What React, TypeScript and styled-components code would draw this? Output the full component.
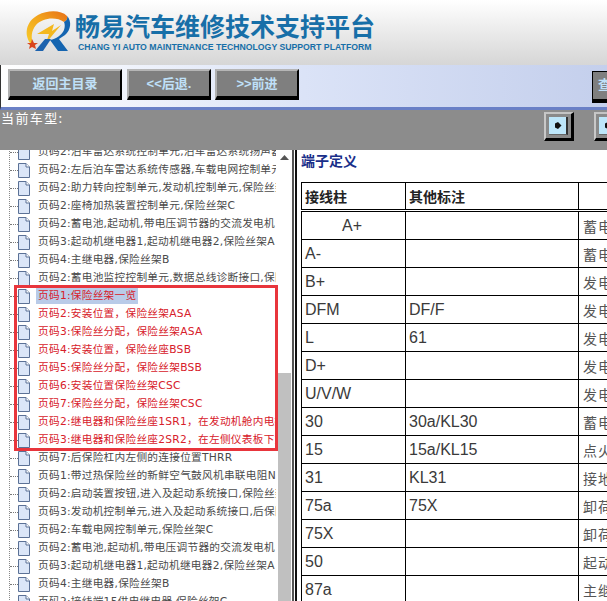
import * as React from "react";
import styled, { createGlobalStyle } from "styled-components";

const GlobalStyle = createGlobalStyle`
  html, body {
    margin: 0;
    padding: 0;
    height: 100%;
    overflow: hidden;
    background: #fff;
  }
`;

const Page = styled.div`
  width: 607px;
  height: 601px;
  overflow: hidden;
  display: flex;
  flex-direction: column;
  font-family: "Liberation Sans", "Noto Sans CJK SC", sans-serif;
`;

const Header = styled.div`
  height: 65px;
  flex: none;
  box-sizing: border-box;
  padding: 10px 0 0 24px;
  display: flex;
  gap: 1px;
  background: linear-gradient(180deg, #ffffff 0%, #eeeeee 40%, #d6d6d6 100%);
`;

const Brand = styled.div`
  display: flex;
  flex-direction: column;
  color: #176fa8;
  font-family: "Noto Sans CJK SC", sans-serif;
`;

const Title = styled.div`
  font-size: 25px;
  line-height: 30px;
  height: 30px;
  font-weight: 700;
  white-space: nowrap;
`;

const Subtitle = styled.div`
  margin: 1px 0 0 3px;
  font-family: "Liberation Sans", sans-serif;
  font-size: 8.7px;
  line-height: 12px;
  font-weight: 700;
  white-space: nowrap;
`;

const Toolbar = styled.div`
  height: 45px;
  flex: none;
  box-sizing: border-box;
  padding: 4px 0 0 7px;
  display: flex;
  align-items: flex-start;
  border-left: 1px solid #333;
  border-bottom: 3px solid #6a80c6;
  background: linear-gradient(90deg, #ffffff 0%, #dbe3f7 50%, #c4cfec 100%);
  position: relative;
`;

const ToolButton = styled.div<{ $w: number; $gap: number }>`
  width: ${(p) => p.$w}px;
  height: 31px;
  margin-right: ${(p) => p.$gap}px;
  flex: none;
  box-sizing: border-box;
  background: #7f7f7f;
  border-style: solid;
  border-width: 2px 2px 4px 2px;
  border-color: #b5b5b5 #000 #000 #b0b0b0;
  color: #bfe0f8;
  font-family: "Liberation Sans", "Noto Sans CJK SC", sans-serif;
  font-size: 13px;
  font-weight: 700;
  line-height: 25px;
  text-align: center;
  white-space: nowrap;
`;

const ClippedButton = styled(ToolButton)`
  position: absolute;
  left: 591px;
  top: 6px;
  height: 32px;
  margin: 0;
  text-align: left;
  padding-left: 5px;
  border-color: #000 #000 #000 #000;
  border-width: 1px 1px 4px 1px;
`;

const ModelBar = styled.div`
  height: 40px;
  flex: none;
  box-sizing: border-box;
  display: flex;
  justify-content: space-between;
  background: #8c8c8c;
  color: #fff;
  font-size: 13px;
  line-height: 16px;
`;

const ModelLabel = styled.div`
  padding: 0 0 0 1px;
  letter-spacing: 1.4px;
  font-family: "Noto Sans CJK SC", sans-serif;
`;

const ModelNav = styled.div`
  display: flex;
  gap: 20px;
  padding: 2px 0 0 0;
  margin-right: -17px;
`;

const NavButton = styled.div`
  width: 30px;
  height: 29px;
  box-sizing: border-box;
  border-style: solid;
  border-width: 2px 3px 3px 2px;
  border-color: #c4c4c4 #000 #000 #c8c8c8;
  background: #8a8a8a;
  padding: 3px;
`;

const NavFace = styled.div`
  height: 100%;
  background: #bde6fa;
  border-right: 2px solid #333;
  border-bottom: 1px solid #666;
  box-sizing: border-box;
  display: flex;
  align-items: center;
  justify-content: center;
`;

const Body = styled.div`
  flex: 1;
  min-height: 0;
  display: flex;
`;

const Sidebar = styled.div`
  width: 292px;
  flex: none;
  display: flex;
  position: relative;
  overflow: hidden;
`;

const TreeClip = styled.div`
  width: 276px;
  flex: none;
  overflow: hidden;
  margin-top: -7px;
  background-image: linear-gradient(#888 50%, transparent 50%);
  background-size: 1px 2px;
  background-repeat: repeat-y;
  background-position: 9px 0;
`;

const Row = styled.div<{ $red?: boolean }>`
  height: 18px;
  display: flex;
  align-items: center;
  white-space: nowrap;
  color: ${(p) => (p.$red ? "#d7202a" : "#4a4a4a")};
  font-family: "DejaVu Sans", "Noto Sans CJK SC", sans-serif;
  font-size: 10.7px;
  letter-spacing: 0.25px;
`;

const Dots = styled.span`
  width: 8px;
  margin-left: 10px;
  flex: none;
  border-top: 1px dotted #777;
`;

const RowLabel = styled.span<{ $selected?: boolean }>`
  margin-left: 6px;
  padding: 0 2px;
  line-height: 16px;
  background: ${(p) => (p.$selected ? "#b9cbe8" : "transparent")};
`;

const Scrollbar = styled.div`
  width: 16px;
  flex: none;
  display: flex;
  flex-direction: column;
  background: #fff;
`;

const ScrollUp = styled.div`
  height: 223px;
  flex: none;
  display: flex;
  justify-content: center;
  padding-top: 5px;
  box-sizing: border-box;
`;

const ScrollThumb = styled.div`
  flex: 1;
  margin: 0 1px 0 2px;
  background: #c0c0c0;
`;

const Divider = styled.div`
  width: 5px;
  flex: none;
  box-sizing: border-box;
  border-left: 2px solid #555;
  border-right: 2px solid #111;
  background: #fff;
`;

const Content = styled.div`
  flex: 1;
  min-width: 0;
  overflow: hidden;
  padding: 0 0 0 4px;
  color: #333;
`;

const Heading = styled.div`
  color: #1a2f8a;
  font-family: "Noto Sans CJK SC", sans-serif;
  font-size: 14px;
  font-weight: 700;
  line-height: 20px;
  margin-bottom: 12px;
`;

const Table = styled.table`
  width: 500px;
  border-collapse: collapse;
  table-layout: fixed;
  font-size: 16px;
`;

const HeadCell = styled.th`
  height: 26px;
  padding: 0 0 0 3px;
  border: 1px solid #000;
  border-bottom: 3px double #000;
  text-align: left;
  color: #222;
  font-family: "Noto Sans CJK SC", sans-serif;
  font-size: 14px;
  font-weight: 700;
  line-height: 20px;
`;

const Cell = styled.td<{ $center?: boolean }>`
  height: 27px;
  padding: 0 0 0 ${(p) => (p.$center ? "40px" : "3px")};
  border: 1px solid #000;
  font-size: 16px;
  line-height: 20px;
  color: #3a3a3a;
  white-space: nowrap;
  overflow: hidden;
`;

const DescCell = styled(Cell)`
  padding-left: 4px;
  font-family: "Noto Sans CJK SC", sans-serif;
  font-size: 14px;
  letter-spacing: 1px;
  color: #555;
`;

const RedBox = styled.div`
  position: absolute;
  left: 14px;
  top: 135px;
  width: 264px;
  height: 166px;
  box-sizing: border-box;
  border: 3px solid #e8353c;
  pointer-events: none;
`;

const Logo = () => (
  <svg width="50" height="44" viewBox="0 0 50 44" style={{ flex: "none" }}>
    <defs>
      <linearGradient id="swoosh" x1="0" y1="1" x2="1" y2="0">
        <stop offset="0" stopColor="#f7cc2a" />
        <stop offset="0.55" stopColor="#f2a41c" />
        <stop offset="1" stopColor="#e66f18" />
      </linearGradient>
    </defs>
    <path
      d="M7 34C0 26 1 12 14 5C24 0 37 0 43 6C44 9 42 11 40 12C32 6 18 8 12 15C7 21 7 28 9 33Z"
      fill="url(#swoosh)"
    />
    <path d="M13 24L30 14L28 21L37 15L22 33L25 24Z" fill="#f4b81e" />
    <path d="M8 29L10 33L14 33L11 35L12 39L8 37L5 39L6 35L3 33L7 33Z" fill="#d9451c" />
    <path d="M11 41L21 29H27L19 41Z" fill="#1c62ae" />
    <path d="M43 6C48 11 47 20 41 25L35 29L44 41H34L26 30C32 29 38 25 40 20C41 17 41 14 40 12C42 11 44 9 43 6Z" fill="#1565b0" />
  </svg>
);

const PageIcon = () => (
  <svg width="12" height="15" viewBox="0 0 12 15" style={{ flex: "none" }}>
    <path d="M0.5 0.5H8L11.5 4V14.5H0.5Z" fill="#dbe6f8" stroke="#5b7196" />
    <path d="M8 0.5V4H11.5" fill="#fff" stroke="#5b7196" />
  </svg>
);

const ArrowUp = () => (
  <svg width="9" height="5" viewBox="0 0 9 5">
    <path d="M4.5 0L9 5H0Z" fill="#555" />
  </svg>
);

const NavArrow = () => (
  <svg width="8" height="9" viewBox="0 0 8 9">
    <path d="M1 2.5L4 1L7.5 4.5L4 8L1 6.5Z" fill="#111" />
  </svg>
);

interface TreeItem {
  label: string;
  red?: boolean;
  selected?: boolean;
}

const treeItems: TreeItem[] = [
  { label: "页码2:泊车雷达系统控制单元,泊车雷达系统扬声器" },
  { label: "页码2:左后泊车雷达系统传感器,车载电网控制单元" },
  { label: "页码2:助力转向控制单元,发动机控制单元,保险丝架" },
  { label: "页码2:座椅加热装置控制单元,保险丝架C" },
  { label: "页码2:蓄电池,起动机,带电压调节器的交流发电机" },
  { label: "页码3:起动机继电器1,起动机继电器2,保险丝架A" },
  { label: "页码4:主继电器,保险丝架B" },
  { label: "页码2:蓄电池监控控制单元,数据总线诊断接口,保险" },
  { label: "页码1:保险丝架一览", red: true, selected: true },
  { label: "页码2:安装位置\uFF0C保险丝架ASA", red: true },
  { label: "页码3:保险丝分配\uFF0C保险丝架ASA", red: true },
  { label: "页码4:安装位置\uFF0C保险丝座BSB", red: true },
  { label: "页码5:保险丝分配\uFF0C保险丝架BSB", red: true },
  { label: "页码6:安装位置保险丝架CSC", red: true },
  { label: "页码7:保险丝分配\uFF0C保险丝架CSC", red: true },
  { label: "页码2:继电器和保险丝座1SR1\uFF0C在发动机舱内电控", red: true },
  { label: "页码3:继电器和保险丝座2SR2\uFF0C在左侧仪表板下方", red: true },
  { label: "页码7:后保险杠内左侧的连接位置THRR" },
  { label: "页码1:带过热保险丝的新鲜空气鼓风机串联电阻N24" },
  { label: "页码2:启动装置按钮,进入及起动系统接口,保险丝架" },
  { label: "页码3:发动机控制单元,进入及起动系统接口,后保险" },
  { label: "页码2:车载电网控制单元,保险丝架C" },
  { label: "页码2:蓄电池,起动机,带电压调节器的交流发电机" },
  { label: "页码3:起动机继电器1,起动机继电器2,保险丝架A" },
  { label: "页码4:主继电器,保险丝架B" },
  { label: "页码2:接线端15供电继电器,保险丝架C" },
];

const tableRows = [
  ["A+", "", "蓄电池正极"],
  ["A-", "", "蓄电池负极"],
  ["B+", "", "发电机正极"],
  ["DFM", "DF/F", "发电机负载"],
  ["L", "61", "发电机指示灯"],
  ["D+", "", "发电机励磁"],
  ["U/V/W", "", "发电机相位"],
  ["30", "30a/KL30", "蓄电池正极"],
  ["15", "15a/KL15", "点火开关"],
  ["31", "KL31", "接地"],
  ["75a", "75X", "卸荷继电器"],
  ["75X", "", "卸荷继电器"],
  ["50", "", "起动信号"],
  ["87a", "", "主继电器"],
];

export default function App() {
  return (
    <Page>
      <GlobalStyle />
      <Header>
        <Logo />
        <Brand>
          <Title>畅易汽车维修技术支持平台</Title>
          <Subtitle>CHANG YI AUTO MAINTENANCE TECHNOLOGY SUPPORT PLATFORM</Subtitle>
        </Brand>
      </Header>
      <Toolbar>
        <ToolButton $w={114} $gap={5}>返回主目录</ToolButton>
        <ToolButton $w={84} $gap={4}>&lt;&lt;后退.</ToolButton>
        <ToolButton $w={84} $gap={0}>&gt;&gt;前进</ToolButton>
        <ClippedButton $w={40} $gap={0}>查看</ClippedButton>
      </Toolbar>
      <ModelBar>
        <ModelLabel>当前车型:</ModelLabel>
        <ModelNav>
          <NavButton>
            <NavFace>
              <NavArrow />
            </NavFace>
          </NavButton>
          <NavButton>
            <NavFace>
              <NavArrow />
            </NavFace>
          </NavButton>
        </ModelNav>
      </ModelBar>
      <Body>
        <Sidebar>
          <TreeClip>
            {treeItems.map((item, idx) => (
              <Row key={"tree-row-" + idx} $red={item.red}>
                <Dots />
                <PageIcon />
                <RowLabel $selected={item.selected}>{item.label}</RowLabel>
              </Row>
            ))}
          </TreeClip>
          <Scrollbar>
            <ScrollUp>
              <ArrowUp />
            </ScrollUp>
            <ScrollThumb />
          </Scrollbar>
          <RedBox />
        </Sidebar>
        <Divider />
        <Content>
          <Heading>端子定义</Heading>
          <Table>
            <colgroup>
              <col style={{ width: 104 }} />
              <col style={{ width: 173 }} />
              <col style={{ width: 223 }} />
            </colgroup>
            <thead>
              <tr>
                <HeadCell>接线柱</HeadCell>
                <HeadCell>其他标注</HeadCell>
                <HeadCell />
              </tr>
            </thead>
            <tbody>
              {tableRows.map((row, idx) => (
                <tr key={"terminal-" + idx}>
                  <Cell $center={idx === 0}>{row[0]}</Cell>
                  <Cell>{row[1]}</Cell>
                  <DescCell>{row[2]}</DescCell>
                </tr>
              ))}
            </tbody>
          </Table>
        </Content>
      </Body>
    </Page>
  );
}
